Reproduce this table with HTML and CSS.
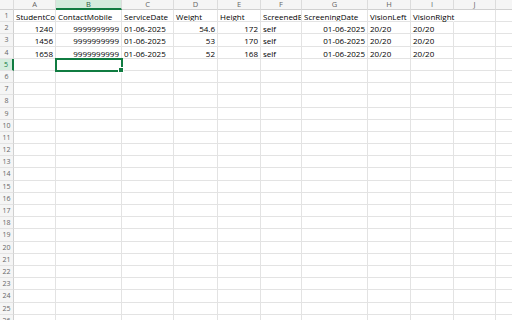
FILE: index.html
```html
<!DOCTYPE html>
<html>
<head>
<meta charset="utf-8">
<link rel="stylesheet" href="styles.css">
</head>
<body>
<div class="sheet">
  <div class="ch corner"></div>
  <div class="ch">A</div><div class="ch sel">B</div><div class="ch">C</div><div class="ch">D</div><div class="ch">E</div><div class="ch">F</div><div class="ch">G</div><div class="ch">H</div><div class="ch">I</div><div class="ch">J</div><div class="ch last"></div>

  <div class="rh">1</div>
  <div class="c">StudentCode</div><div class="c">ContactMobile</div><div class="c">ServiceDate</div><div class="c">Weight</div><div class="c">Height</div><div class="c">ScreenedBy</div><div class="c">ScreeningDate</div><div class="c">VisionLeft</div><div class="c spill">VisionRight</div><div class="c"></div><div class="c last"></div>

  <div class="rh">2</div>
  <div class="c n">1240</div><div class="c n">9999999999</div><div class="c">01-06-2025</div><div class="c n">54.6</div><div class="c n">172</div><div class="c">self</div><div class="c n">01-06-2025</div><div class="c">20/20</div><div class="c">20/20</div><div class="c"></div><div class="c last"></div>

  <div class="rh">3</div>
  <div class="c n">1456</div><div class="c n">9999999999</div><div class="c">01-06-2025</div><div class="c n">53</div><div class="c n">170</div><div class="c">self</div><div class="c n">01-06-2025</div><div class="c">20/20</div><div class="c">20/20</div><div class="c"></div><div class="c last"></div>

  <div class="rh">4</div>
  <div class="c n">1658</div><div class="c n">9999999999</div><div class="c">01-06-2025</div><div class="c n">52</div><div class="c n">168</div><div class="c">self</div><div class="c n">01-06-2025</div><div class="c">20/20</div><div class="c">20/20</div><div class="c"></div><div class="c last"></div>

  <div class="rh selrow">5</div>
  <div class="c"></div><div class="c active"><span class="handle"></span></div><div class="c"></div><div class="c"></div><div class="c"></div><div class="c"></div><div class="c"></div><div class="c"></div><div class="c"></div><div class="c"></div><div class="c last"></div>

  <div class="rh">6</div><div class="c"></div><div class="c"></div><div class="c"></div><div class="c"></div><div class="c"></div><div class="c"></div><div class="c"></div><div class="c"></div><div class="c"></div><div class="c"></div><div class="c last"></div>
  <div class="rh">7</div><div class="c"></div><div class="c"></div><div class="c"></div><div class="c"></div><div class="c"></div><div class="c"></div><div class="c"></div><div class="c"></div><div class="c"></div><div class="c"></div><div class="c last"></div>
  <div class="rh">8</div><div class="c"></div><div class="c"></div><div class="c"></div><div class="c"></div><div class="c"></div><div class="c"></div><div class="c"></div><div class="c"></div><div class="c"></div><div class="c"></div><div class="c last"></div>
  <div class="rh">9</div><div class="c"></div><div class="c"></div><div class="c"></div><div class="c"></div><div class="c"></div><div class="c"></div><div class="c"></div><div class="c"></div><div class="c"></div><div class="c"></div><div class="c last"></div>
  <div class="rh">10</div><div class="c"></div><div class="c"></div><div class="c"></div><div class="c"></div><div class="c"></div><div class="c"></div><div class="c"></div><div class="c"></div><div class="c"></div><div class="c"></div><div class="c last"></div>
  <div class="rh">11</div><div class="c"></div><div class="c"></div><div class="c"></div><div class="c"></div><div class="c"></div><div class="c"></div><div class="c"></div><div class="c"></div><div class="c"></div><div class="c"></div><div class="c last"></div>
  <div class="rh">12</div><div class="c"></div><div class="c"></div><div class="c"></div><div class="c"></div><div class="c"></div><div class="c"></div><div class="c"></div><div class="c"></div><div class="c"></div><div class="c"></div><div class="c last"></div>
  <div class="rh">13</div><div class="c"></div><div class="c"></div><div class="c"></div><div class="c"></div><div class="c"></div><div class="c"></div><div class="c"></div><div class="c"></div><div class="c"></div><div class="c"></div><div class="c last"></div>
  <div class="rh">14</div><div class="c"></div><div class="c"></div><div class="c"></div><div class="c"></div><div class="c"></div><div class="c"></div><div class="c"></div><div class="c"></div><div class="c"></div><div class="c"></div><div class="c last"></div>
  <div class="rh">15</div><div class="c"></div><div class="c"></div><div class="c"></div><div class="c"></div><div class="c"></div><div class="c"></div><div class="c"></div><div class="c"></div><div class="c"></div><div class="c"></div><div class="c last"></div>
  <div class="rh">16</div><div class="c"></div><div class="c"></div><div class="c"></div><div class="c"></div><div class="c"></div><div class="c"></div><div class="c"></div><div class="c"></div><div class="c"></div><div class="c"></div><div class="c last"></div>
  <div class="rh">17</div><div class="c"></div><div class="c"></div><div class="c"></div><div class="c"></div><div class="c"></div><div class="c"></div><div class="c"></div><div class="c"></div><div class="c"></div><div class="c"></div><div class="c last"></div>
  <div class="rh">18</div><div class="c"></div><div class="c"></div><div class="c"></div><div class="c"></div><div class="c"></div><div class="c"></div><div class="c"></div><div class="c"></div><div class="c"></div><div class="c"></div><div class="c last"></div>
  <div class="rh">19</div><div class="c"></div><div class="c"></div><div class="c"></div><div class="c"></div><div class="c"></div><div class="c"></div><div class="c"></div><div class="c"></div><div class="c"></div><div class="c"></div><div class="c last"></div>
  <div class="rh">20</div><div class="c"></div><div class="c"></div><div class="c"></div><div class="c"></div><div class="c"></div><div class="c"></div><div class="c"></div><div class="c"></div><div class="c"></div><div class="c"></div><div class="c last"></div>
  <div class="rh">21</div><div class="c"></div><div class="c"></div><div class="c"></div><div class="c"></div><div class="c"></div><div class="c"></div><div class="c"></div><div class="c"></div><div class="c"></div><div class="c"></div><div class="c last"></div>
  <div class="rh">22</div><div class="c"></div><div class="c"></div><div class="c"></div><div class="c"></div><div class="c"></div><div class="c"></div><div class="c"></div><div class="c"></div><div class="c"></div><div class="c"></div><div class="c last"></div>
  <div class="rh">23</div><div class="c"></div><div class="c"></div><div class="c"></div><div class="c"></div><div class="c"></div><div class="c"></div><div class="c"></div><div class="c"></div><div class="c"></div><div class="c"></div><div class="c last"></div>
  <div class="rh">24</div><div class="c"></div><div class="c"></div><div class="c"></div><div class="c"></div><div class="c"></div><div class="c"></div><div class="c"></div><div class="c"></div><div class="c"></div><div class="c"></div><div class="c last"></div>
  <div class="rh">25</div><div class="c"></div><div class="c"></div><div class="c"></div><div class="c"></div><div class="c"></div><div class="c"></div><div class="c"></div><div class="c"></div><div class="c"></div><div class="c"></div><div class="c last"></div>
  <div class="rh">26</div><div class="c"></div><div class="c"></div><div class="c"></div><div class="c"></div><div class="c"></div><div class="c"></div><div class="c"></div><div class="c"></div><div class="c"></div><div class="c"></div><div class="c last"></div>
</div>
</body>
</html>
```
FILE: styles.css
```css
html, body {
  margin: 0;
  padding: 0;
  background: #ffffff;
  overflow: hidden;
}

.sheet {
  display: grid;
  grid-template-columns: 14px 42px 66px 52px 44px 43px 41px 66px 43px 43px 42px 16px;
  grid-template-rows: 10px repeat(26, 12.2px);
  font-family: "Open Sans", "Liberation Sans", sans-serif;
  font-size: 8px;
  color: #000000;
  width: 512px;
  height: 320px;
  overflow: hidden;
}

.ch {
  box-sizing: border-box;
  background: #f5f5f5;
  border-right: 1px solid #dcdcdc;
  border-bottom: 1px solid #d0d0d0;
  color: #666666;
  font-size: 7.5px;
  line-height: 9px;
  text-align: center;
}

.ch.corner {
  background: #f5f5f5;
}

.ch.sel {
  background: #d3ecdd;
  color: #2b5e3f;
  border-bottom: 2px solid #107c41;
}

.ch.last {
  border-right: none;
}

.rh {
  box-sizing: border-box;
  background: #f5f5f5;
  border-right: 1px solid #d0d0d0;
  border-bottom: 1px solid #e3e3e3;
  color: #666666;
  font-size: 7px;
  line-height: 12px;
  text-align: center;
}

.rh.selrow {
  background: #d3ecdd;
  color: #107c41;
  border-right: 2px solid #107c41;
}

.c {
  box-sizing: border-box;
  border-right: 1px solid #e3e3e3;
  border-bottom: 1px solid #e3e3e3;
  padding: 1px 2px 0;
  line-height: 11px;
  white-space: nowrap;
  overflow: hidden;
  position: relative;
}

.c.n {
  text-align: right;
}

.c.last {
  border-right: none;
}

.c.spill {
  overflow: visible;
  border-right-color: transparent;
}

.c.active {
  overflow: visible;
  outline: 2px solid #107c41;
  outline-offset: -1px;
  z-index: 2;
}

.handle {
  position: absolute;
  right: -3px;
  bottom: -3px;
  width: 4px;
  height: 4px;
  background: #107c41;
  border: 1px solid #ffffff;
}
```
